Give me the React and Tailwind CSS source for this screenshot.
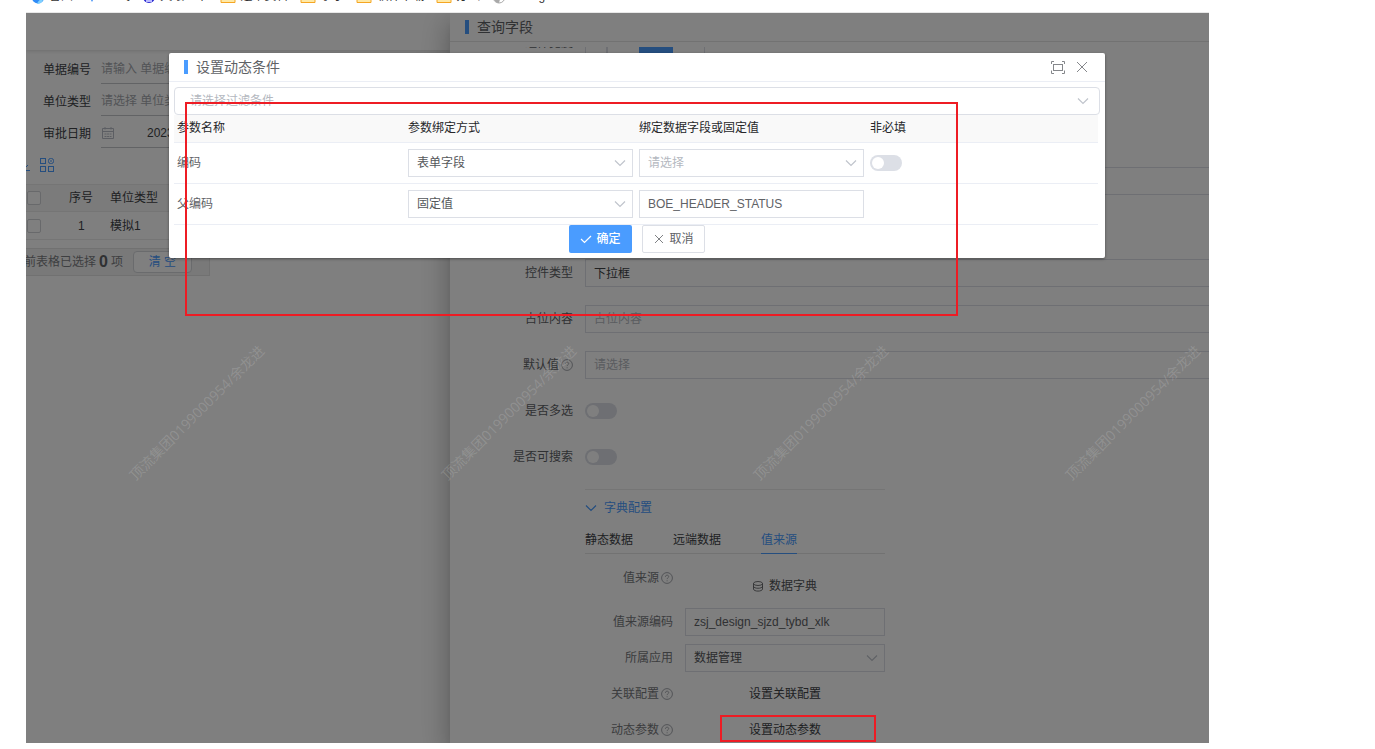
import React, { useState } from 'react';

const bookmarks = [
    { icon: 'drop', text: '智图' },
    { icon: 'spark', text: '一 飞' },
    { icon: 'badge', text: '天眼一下' },
    { icon: 'folder', text: '运维资料' },
    { icon: 'folder', text: '李小' },
    { icon: 'folder', text: '软件下载' },
    { icon: 'folder', text: '办公' },
    { icon: 'globe', text: 'Config' }
];

const watermarks = [1, 2, 3, 4];

function BookmarkIcon({ type }) {
    if (type === 'folder') {
        return (
            <svg className="w-4 h-3.5 shrink-0" viewBox="0 0 16 14" fill="none">
                <path d="M1 1h5l1.500 2H15v9.500H1z" fill="#ffe9a6" stroke="#f5a623" />
            </svg>
        );
    }
    if (type === 'globe') {
        return (
            <svg className="w-3.5 h-3.5 shrink-0" viewBox="0 0 14 14">
                <circle cx="7" cy="7" r="6" fill="#fff" stroke="#a8a8a8" />
                <path d="M2 4c3 0 3 3 5 4s0 4 0 5C3 13 1 9 2 4z" fill="#a8a8a8" />
            </svg>
        );
    }
    if (type === 'badge') {
        return (
            <svg className="w-3.5 h-3.5 shrink-0" viewBox="0 0 14 14">
                <circle cx="7" cy="7" r="6" fill="#2a2ad0" />
                <path d="M4 11h6" stroke="#b9b9ff" strokeWidth="2" />
            </svg>
        );
    }
    if (type === 'spark') {
        return (
            <svg className="w-3.5 h-3.5 shrink-0" viewBox="0 0 14 14">
                <path d="M7 0l3 6-3 6-3-6z" fill="#3b8cf5" />
            </svg>
        );
    }
    return (
        <svg className="w-3.5 h-3.5 shrink-0" viewBox="0 0 14 14">
            <circle cx="7" cy="7.500" r="6" fill="#2f8cf7" />
            <path d="M6 14c3 0 6-2 6-5-3 0-5 2-6 5z" fill="#7fd0ff" />
        </svg>
    );
}

function Chevron({ className }) {
    return (
        <svg className={className} width="12" height="8" viewBox="0 0 12 8" fill="none" stroke="currentColor" strokeWidth="1.200">
            <path d="M1 1.500l5 5 5-5" />
        </svg>
    );
}

function Question() {
    return (
        <svg className="w-3 h-3 ml-0.5 text-[#a4a7ad]" viewBox="0 0 12 12" fill="none" stroke="currentColor">
            <circle cx="6" cy="6" r="5.400" />
            <path d="M4.400 4.800c0-2.200 3.300-2.100 3.300-.2 0 1.200-1.600 1.200-1.600 2.500M6.100 8.300v1" />
        </svg>
    );
}

function Select({ id, label, value, placeholder, options, className = '', big }) {
    const [current, setCurrent] = useState(value || '');
    return (
        <div className={`relative ${className}`}>
            <select
                id={id}
                aria-label={label}
                value={current}
                onChange={(e) => setCurrent(e.target.value)}
                className={`block w-full h-7 appearance-none border border-[#dcdfe6] bg-white outline-none ${big ? 'rounded pl-[15px]' : 'pl-2'} ${current ? 'text-[#55575b]' : 'text-[#b4b8c0]'}`}
            >
                {placeholder && <option value="">{placeholder}</option>}
                {(options || []).map((o) => (
                    <option key={o} value={o}>{o}</option>
                ))}
            </select>
            <Chevron className={`absolute top-2.5 text-[#c0c4cc] pointer-events-none ${big ? 'right-[11px]' : 'right-[7px]'}`} />
        </div>
    );
}

function Switch({ id, label }) {
    const [on, setOn] = useState(false);
    return (
        <span className="relative inline-flex h-4 w-8 shrink-0">
            <input
                id={id}
                type="checkbox"
                role="switch"
                aria-label={label}
                checked={on}
                onChange={(e) => setOn(e.target.checked)}
                className="peer h-4 w-8 appearance-none rounded-full bg-[#dcdfe6] checked:bg-[#4a9cff]"
            />
            <span className="pointer-events-none absolute left-0.5 top-0.5 h-3 w-3 rounded-full bg-white peer-checked:left-[18px]" />
        </span>
    );
}

function Field({ id, label, help, children }) {
    return (
        <div className="flex h-7 items-center gap-3 mb-[18px]">
            <label htmlFor={id} className="flex w-[123px] shrink-0 items-center justify-end text-[#606266]">
                {label}
                {help && <Question />}
            </label>
            {children}
        </div>
    );
}

function SubField({ id, label, help, children }) {
    return (
        <div className="flex items-start gap-3">
            <label htmlFor={id} className="flex h-7 w-[88px] shrink-0 items-center justify-end text-[#77797d]">
                {label}
                {help && <Question />}
            </label>
            {children}
        </div>
    );
}

function ListPage() {
    return (
        <section className="w-[424px] shrink-0 overflow-hidden text-[#404246]">
            <div className="h-[37px] shadow-[0_1px_4px_rgba(0,0,0,0.15)]"></div>
            <div className="pt-[3px]">
                <div className="flex h-8 items-center gap-2.5">
                    <label htmlFor="billNo" className="w-[65px] pt-px text-right">单据编号</label>
                    <input id="billNo" placeholder="请输入 单据编号" className="h-[30px] flex-1 border-b border-[#c4c6ca] pt-px outline-none placeholder:text-[#a4a7ad]" />
                </div>
                <div className="flex h-8 items-center gap-2.5">
                    <label htmlFor="unitType" className="w-[65px] pt-px text-right">单位类型</label>
                    <input id="unitType" placeholder="请选择 单位类型" className="h-[30px] flex-1 border-b border-[#c4c6ca] pt-px outline-none placeholder:text-[#a4a7ad]" />
                </div>
                <div className="flex h-8 items-center gap-2.5">
                    <label htmlFor="auditDate" className="w-[65px] pt-px text-right">审批日期</label>
                    <div className="flex h-[30px] flex-1 items-center border-b border-[#c4c6ca] pt-px">
                        <svg className="w-3.5 h-3.5" viewBox="0 0 14 14" fill="none" stroke="#b9bdc6">
                            <path d="M1.500 2.500h11v10h-11zM1.500 5.500h11M4 1v2.500M10 1v2.500" />
                            <path d="M3.500 8h7M3.500 10.500h7" strokeDasharray="2 .6" />
                        </svg>
                        <input id="auditDate" defaultValue="2023" className="ml-8 w-40 outline-none" />
                    </div>
                </div>
            </div>
            <div className="flex h-[35px] items-center pb-1 text-[#4a9cff]">
                <svg className="w-1 h-3.5" viewBox="0 0 4 14" fill="none" stroke="currentColor">
                    <path d="M0 12.500h4M0 9l2-2" />
                </svg>
                <svg className="ml-2.5 w-3.5 h-3.5" viewBox="0 0 14 14" fill="none" stroke="currentColor">
                    <rect x=".5" y=".5" width="5" height="5" />
                    <rect x="8.500" y=".5" width="5" height="5" rx="2" />
                    <rect x=".5" y="8.500" width="5" height="5" />
                    <rect x="8.500" y="8.500" width="5" height="5" />
                    <path d="M11 2v2" />
                </svg>
            </div>
            <table className="w-full table-fixed border-t border-[#ebebeb] text-left">
                <thead>
                    <tr className="h-[27px] border-b border-[#ebebeb] bg-[#f7f7f7]">
                        <th className="w-[30px]">
                            <input type="checkbox" aria-label="全选" className="ml-px block h-3.5 w-3.5 appearance-none rounded-xs border border-[#d0d2d6] bg-white" />
                        </th>
                        <th className="w-[51px] pl-[13px] font-normal">序号</th>
                        <th className="pl-[3px] font-normal">单位类型</th>
                    </tr>
                </thead>
                <tbody>
                    <tr className="h-7 border-b border-[#ebebeb]">
                        <td>
                            <input type="checkbox" aria-label="选择" className="ml-px block h-3.5 w-3.5 appearance-none rounded-xs border border-[#d0d2d6] bg-white" />
                        </td>
                        <td className="pl-[22px]">1</td>
                        <td className="pl-[3px]">模拟1</td>
                    </tr>
                </tbody>
            </table>
            <div className="mt-2 flex h-7 w-[184px] items-center whitespace-nowrap border border-l-0 border-[#e2e2e2] bg-[#f2f2f2] text-[#7c7e82]">
                <span className="-ml-0.5">前表格已选择</span>
                <b className="mx-[3px] text-base text-[#606266]">0</b>
                <span>项</span>
                <button className="ml-2.5 h-[22px] w-[59px] rounded-sm border border-[#d4d6da] bg-white text-[#4a9cff]">清 空</button>
            </div>
        </section>
    );
}

function FieldDrawer() {
    return (
        <section className="relative flex flex-1 flex-col overflow-hidden bg-white">
            <header className="flex h-[29px] shrink-0 items-center border-b border-[#e4e4e4] pl-[15px]">
                <span className="h-3.5 w-1 bg-[#4a9cff]" />
                <h2 className="ml-2 text-sm text-[#606266]">查询字段</h2>
            </header>
            <div className="mt-[5px] min-h-0 flex-1 overflow-hidden">
                <div className="-mt-[18px] -mr-px">
                    <Field label="组件宽度">
                        <div className="flex h-7">
                            <button aria-label="小" className="w-[22px] border border-[#dcdfe6]"></button>
                            <button aria-label="中" className="w-8 border-y border-l border-[#dcdfe6]"></button>
                            <button aria-label="大" className="w-[34px] bg-[#4a9cff]"></button>
                            <button aria-label="满" className="w-8 border border-l-0 border-[#dcdfe6]"></button>
                        </div>
                    </Field>
                    <div className="h-[92px]"></div>
                    <Field>
                        <input aria-label="字段" className="h-7 flex-1 border border-[#dcdfe6] px-2" />
                    </Field>
                    <div className="h-[46px]"></div>
                    <Field id="controlType" label="控件类型">
                        <input id="controlType" defaultValue="下拉框" className="h-7 flex-1 border border-[#dcdfe6] px-2 pb-0.5 text-[#404246] outline-none" />
                    </Field>
                    <Field id="holder" label="占位内容">
                        <input id="holder" placeholder="占位内容" className="h-7 flex-1 border border-[#dcdfe6] px-2 outline-none placeholder:text-[#b4b8c0]" />
                    </Field>
                    <Field id="defaultValue" label="默认值" help>
                        <input id="defaultValue" placeholder="请选择" className="h-7 flex-1 border border-[#dcdfe6] px-2 outline-none placeholder:text-[#b4b8c0]" />
                    </Field>
                    <Field id="multiple" label="是否多选">
                        <Switch id="multiple" />
                    </Field>
                    <Field id="searchable" label="是否可搜索">
                        <Switch id="searchable" />
                    </Field>
                    <div className="ml-[135px] w-[300px] border-t border-[#ebebeb]">
                        <button className="flex h-9 items-center gap-[7px] text-[#4a9cff]">
                            <Chevron />
                            字典配置
                        </button>
                        <nav className="flex h-7 gap-10 border-b border-[#e4e4e4] text-[#404246]">
                            <button>静态数据</button>
                            <button>远端数据</button>
                            <button className="-mb-px border-b border-[#4a9cff] text-[#4a9cff]">值来源</button>
                        </nav>
                        <div className="flex flex-col gap-2 pt-2.5">
                            <div className="-mb-2">
                                <SubField label="值来源" help>
                                    <button className="flex h-11 flex-1 items-center justify-center gap-1.5 text-[#505256]">
                                        <svg className="w-2.5 h-3" viewBox="0 0 10 12" fill="none" stroke="currentColor" strokeWidth=".8">
                                            <ellipse cx="5" cy="3.500" rx="4.500" ry="2" />
                                            <path d="M.5 3.500v5.500c0 2.800 9 2.800 9 0V3.500M.5 6.300c0 2.600 9 2.600 9 0" />
                                        </svg>
                                        数据字典
                                    </button>
                                </SubField>
                            </div>
                            <SubField id="sourceCode" label="值来源编码">
                                <input id="sourceCode" defaultValue="zsj_design_sjzd_tybd_xlk" className="h-7 min-w-0 flex-1 border border-[#dcdfe6] px-2 text-[#606266] outline-none" />
                            </SubField>
                            <SubField id="app" label="所属应用">
                                <Select id="app" value="数据管理" options={['数据管理']} className="flex-1" />
                            </SubField>
                            <SubField label="关联配置" help>
                                <button className="h-7 flex-1 text-[#404246]">设置关联配置</button>
                            </SubField>
                            <SubField label="动态参数" help>
                                <button className="h-7 flex-1 text-[#404246]">设置动态参数</button>
                            </SubField>
                        </div>
                    </div>
                </div>
            </div>
        </section>
    );
}

function ConditionDialog() {
    return (
        <div role="dialog" className="relative z-10 mt-10 ml-[143px] mr-[104px] rounded-xs bg-white pb-[5px] shadow-[0_1px_3px_rgba(0,0,0,0.4)]">
            <header className="flex h-[29px] items-center border-b border-[#ebeef5] pl-[15px] pr-[17px]">
                <span className="h-3.5 w-1 bg-[#4a9cff]" />
                <h2 className="ml-2 flex-1 text-sm text-[#606266]">设置动态条件</h2>
                <button aria-label="全屏" className="mr-2.5 text-[#85878b]">
                    <svg className="w-4 h-3.5" viewBox="0 0 16 14" fill="none" stroke="currentColor">
                        <path d="M1.500 4V1.500H4M12 1.500h2.500V4M14.500 10.500v3H12M4 13.500H1.500v-3" />
                        <rect x="3.500" y="4.500" width="9" height="6" />
                    </svg>
                </button>
                <button aria-label="关闭" className="text-[#85878b]">
                    <svg className="w-3 h-3" viewBox="0 0 12 12" fill="none" stroke="currentColor">
                        <path d="M1 1l10 10M11 1L1 11" />
                    </svg>
                </button>
            </header>
            <div className="px-[5px] pt-[5px]">
                <Select label="过滤条件" placeholder="请选择过滤条件" big />
                <div className="mr-0.5">
                    <table className="w-full table-fixed text-left text-[#606266]">
                        <thead>
                            <tr className="h-[27px] border-b border-[#ebeef5] bg-[#f9f9f9] text-[#26272a]">
                                <th className="px-[3px] font-normal">参数名称</th>
                                <th className="px-[3px] font-normal">参数绑定方式</th>
                                <th className="px-[3px] font-normal">绑定数据字段或固定值</th>
                                <th className="px-[3px] font-normal">非必填</th>
                            </tr>
                        </thead>
                        <tbody>
                            <tr className="h-[41px] border-b border-[#ebeef5]">
                                <td className="px-[3px]">编码</td>
                                <td className="px-[3px]">
                                    <Select label="编码绑定方式" value="表单字段" options={['表单字段', '固定值']} />
                                </td>
                                <td className="px-[3px]">
                                    <Select label="编码绑定字段" placeholder="请选择" />
                                </td>
                                <td className="px-[3px]">
                                    <div className="flex">
                                        <Switch label="非必填" />
                                    </div>
                                </td>
                            </tr>
                            <tr className="h-[41px] border-b border-[#ebeef5]">
                                <td className="px-[3px]">父编码</td>
                                <td className="px-[3px]">
                                    <Select label="父编码绑定方式" value="固定值" options={['表单字段', '固定值']} />
                                </td>
                                <td className="px-[3px]">
                                    <input aria-label="父编码固定值" defaultValue="BOE_HEADER_STATUS" className="block h-7 w-full border border-[#dcdfe6] px-2 outline-none" />
                                </td>
                                <td></td>
                            </tr>
                        </tbody>
                    </table>
                </div>
                <div className="flex justify-center gap-2.5">
                    <button className="flex h-7 w-[63px] items-center justify-center gap-1 rounded-xs bg-[#4a9cff] font-medium text-white">
                        <svg className="w-3 h-3" viewBox="0 0 12 12" fill="none" stroke="currentColor" strokeWidth="1.200">
                            <path d="M1 6l3.500 3.500L11 3" />
                        </svg>
                        确定
                    </button>
                    <button className="flex h-7 w-[63px] items-center justify-center gap-1 rounded-xs border border-[#dcdfe6] text-[#606266]">
                        <svg className="w-3 h-3" viewBox="0 0 12 12" fill="none" stroke="currentColor" strokeWidth=".8">
                            <path d="M2 2l8 8M10 2l-8 8" />
                        </svg>
                        取消
                    </button>
                </div>
            </div>
        </div>
    );
}

export default function App() {
    return (
        <div className="flex h-screen flex-col bg-white pb-1.5 text-xs font-['Liberation_Sans','Noto_Sans_CJK_SC',sans-serif]">
            <div className="ml-[26px] mr-[166px] flex h-[13px] shrink-0 flex-col justify-end overflow-hidden border-b border-[#e8e8e8] pb-2">
                <div className="flex items-end gap-3 pl-[5px] text-[#333]">
                    {bookmarks.map((b) => (
                        <a key={b.text} href="#" className="flex shrink-0 items-end gap-1">
                            <BookmarkIcon type={b.icon} />
                            {b.text}
                        </a>
                    ))}
                </div>
            </div>
            <main className="relative ml-[26px] mr-[166px] min-h-0 flex-1 overflow-hidden">
                <div className="flex h-full">
                    <ListPage />
                    <div className="flex min-w-0 flex-1 shadow-[0_8px_10px_-5px_rgba(0,0,0,0.2),0_16px_24px_2px_rgba(0,0,0,0.14),0_6px_30px_5px_rgba(0,0,0,0.12)]">
                        <FieldDrawer />
                    </div>
                </div>
                <div className="absolute inset-0 flex flex-col bg-black/50">
                    <div className="absolute left-[15px] top-[390px] flex text-sm text-white/15 font-['Open_Sans','Noto_Sans_CJK_SC',sans-serif]">
                        {watermarks.map((n) => (
                            <span key={n} className="w-[312px] shrink-0 -rotate-45 text-center">顶流集团0199000954/余龙进</span>
                        ))}
                    </div>
                    <ConditionDialog />
                    {/* red marks over the parameter table and the button that opens it */}
                    <div className="pointer-events-none absolute left-[159px] top-[89px] z-20 h-[214px] w-[773px] border-2 border-[#ee1c24]"></div>
                    <div className="pointer-events-none absolute left-[694px] top-[702px] z-20 h-[27px] w-[156px] border-2 border-[#ee1c24]"></div>
                </div>
            </main>
        </div>
    );
}
